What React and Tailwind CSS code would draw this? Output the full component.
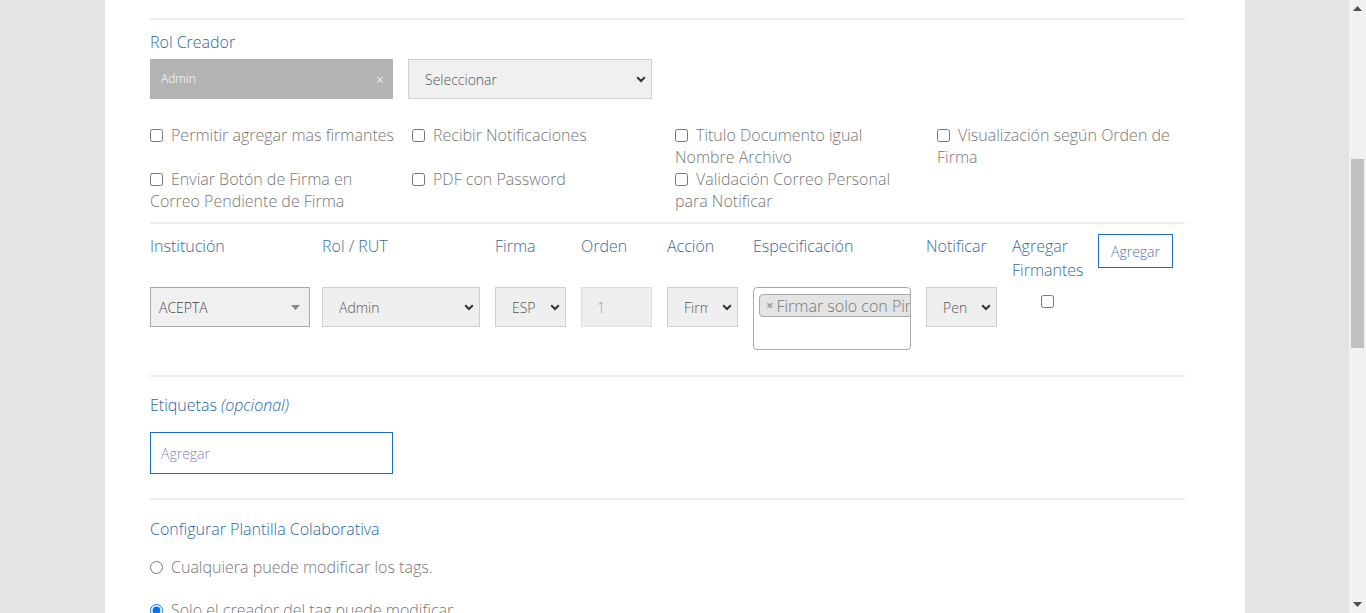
import React from 'react';

// Formulario de configuración de plantilla (firmantes, etiquetas, colaboración)

const font = { fontFamily: '"Open Sans", "Liberation Sans", sans-serif' };

function Chevron() {
  return (
    <svg width="10" height="7" viewBox="0 0 10 7" className="shrink-0">
      <path d="M1.2 1.2 5 5 8.8 1.2" fill="none" stroke="#333" strokeWidth="2" />
    </svg>
  );
}

function FakeSelect({ value, width, bg = 'bg-[#efefef]', border = 'border-[#cfcfcf]' }) {
  return (
    <div className={`flex h-[40px] items-center border ${border} ${bg} pl-[16px] pr-[4px] text-[14px] text-[#555]`} style={{ width }}>
      <span className="flex-1 overflow-hidden whitespace-nowrap">{value}</span>
      <span className="ml-[14px] mr-[1px]">
        <Chevron />
      </span>
    </div>
  );
}

function Check({ label }) {
  return (
    <label className="block w-[262px] pr-[14px] text-[16px] leading-[22px] text-[#777]">
      <input type="checkbox" className="m-0 mr-[8px] inline-block h-[13px] w-[13px] align-[-1px]" />
      {label}
    </label>
  );
}

function Divider({ className = '' }) {
  return <div className={`h-[2px] bg-[#eeeeee] ${className}`} />;
}

export default function App() {
  return (
    <div className="flex h-[613px] w-full overflow-hidden bg-[#e4e4e4] font-light" style={font}>
      <div className="flex-1">
        <div className="ml-[105px] h-full w-[1140px] bg-white pl-[45px] pr-[60px] pt-[18px]">
          <Divider />

          {/* Rol Creador */}
          <div className="mt-[11px] text-[16px] leading-[22px] text-[#2a67a8]">Rol Creador</div>
          <div className="mt-[6px] flex gap-[15px]">
            <div className="flex h-[40px] w-[243px] items-center justify-between bg-[#b3b3b3] pl-[11px] pr-[9px] text-[12px] text-white">
              <span>Admin</span>
              <span className="text-[14px]">×</span>
            </div>
            <div className="flex h-[40px] w-[244px] items-center justify-between border border-[#cfcfcf] bg-[#f0f0f0] pl-[16px] pr-[5px] text-[14px] text-[#555]">
              <span>Seleccionar</span>
              <Chevron />
            </div>
          </div>

          {/* Opciones */}
          <div className="mt-[25px] grid grid-cols-[262px_263px_262px_248px]">
            <Check label="Permitir agregar mas firmantes" />
            <Check label="Recibir Notificaciones" />
            <Check label="Titulo Documento igual Nombre Archivo" />
            <Check label="Visualización según Orden de Firma" />
            <Check label="Enviar Botón de Firma en Correo Pendiente de Firma" />
            <Check label="PDF con Password" />
            <Check label="Validación Correo Personal para Notificar" />
          </div>

          <Divider className="mt-[10px]" />

          {/* Firmantes */}
          <div className="mt-[10px] flex">
            <div className="w-[172px] pr-[12px]">
              <div className="h-[53px] text-[16px] leading-[24px] text-[#3b6b9a]">Institución</div>
              <div className="flex h-[40px] items-center justify-between border border-[#aaaaaa] bg-[#f0f0f0] pl-[8px] pr-[9px] text-[14px] text-[#444]">
                <span>ACEPTA</span>
                <svg width="9" height="5" viewBox="0 0 9 5">
                  <path d="M0 0h9L4.5 5z" fill="#888" />
                </svg>
              </div>
            </div>
            <div className="w-[173px] pr-[15px]">
              <div className="h-[53px] text-[16px] leading-[24px] text-[#3b6b9a]">Rol / RUT</div>
              <div className="flex h-[40px] items-center justify-between border border-[#cfcfcf] bg-[#efefef] pl-[16px] pr-[5px] text-[14px] text-[#555]">
                <span>Admin</span>
                <Chevron />
              </div>
            </div>
            <div className="w-[86px] pr-[15px]">
              <div className="h-[53px] text-[16px] leading-[24px] text-[#3b6b9a]">Firma</div>
              <FakeSelect value="ESP" width="71px" />
            </div>
            <div className="w-[86px] pr-[15px]">
              <div className="h-[53px] text-[16px] leading-[24px] text-[#3b6b9a]">Orden</div>
              <div className="flex h-[40px] w-[71px] items-center border border-[#dddddd] bg-[#eeeeee] pl-[15px] text-[14px] text-[#8a9bb0]">1</div>
            </div>
            <div className="w-[86px] pr-[15px]">
              <div className="h-[53px] text-[16px] leading-[24px] text-[#3b6b9a]">Acción</div>
              <FakeSelect value="Firmar" width="71px" />
            </div>
            <div className="w-[173px] pr-[15px]">
              <div className="h-[53px] text-[16px] leading-[24px] text-[#3b6b9a]">Especificación</div>
              <div className="h-[63px] w-[158px] overflow-hidden rounded-[4px] border border-[#aaaaaa] bg-white pl-[5px] pt-[6px]">
                <div className="flex h-[23px] w-[170px] items-center whitespace-nowrap rounded-[4px] border border-[#aaaaaa] bg-[#e4e4e4] pl-[6px] text-[16px] text-[#777]">
                  <span className="mr-[3px] text-[13px] font-bold text-[#999]">×</span>
                  Firmar solo con Pin
                </div>
              </div>
            </div>
            <div className="w-[86px] pr-[15px]">
              <div className="h-[53px] text-[16px] leading-[24px] text-[#3b6b9a]">Notificar</div>
              <FakeSelect value="Pendiente" width="71px" />
            </div>
            <div className="w-[86px] pr-[15px]">
              <div className="h-[53px] text-[16px] leading-[24px] text-[#3b6b9a]">Agregar Firmantes</div>
              <div className="mt-[8px] flex justify-center">
                <input type="checkbox" className="m-0 h-[13px] w-[13px]" />
              </div>
            </div>
            <div className="w-[86px]">
              <button className="h-[34px] w-[75px] border border-[#1a6fc4] bg-white text-[14px] font-light text-[#5b6fbf]">Agregar</button>
            </div>
          </div>

          <Divider className="mt-[25px]" />

          {/* Etiquetas */}
          <div className="mt-[17px] text-[16px] leading-[22px] text-[#2a67a8]">
            Etiquetas <span className="italic">(opcional)</span>
          </div>
          <input
            placeholder="Agregar"
            className="mt-[16px] h-[42px] w-[243px] border border-[#1a6fc4] bg-white pl-[10px] text-[14px] font-light text-[#555] outline-none placeholder:text-[#7f85c7]"
          />

          <Divider className="mt-[24px]" />

          {/* Plantilla colaborativa */}
          <div className="mt-[18px] text-[16px] leading-[22px] text-[#2a67a8]">Configurar Plantilla Colaborativa</div>
          <label className="mt-[16px] block text-[16px] leading-[22px] text-[#777]">
            <input type="radio" name="colab" className="m-0 mr-[8px] inline-block h-[13px] w-[13px] align-[-1px]" />
            Cualquiera puede modificar los tags.
          </label>
          <label className="mt-[21px] block text-[16px] leading-[22px] text-[#777]">
            <input type="radio" name="colab" defaultChecked className="m-0 mr-[8px] inline-block h-[13px] w-[13px] align-[-1px]" />
            Solo el creador del tag puede modificar
          </label>
        </div>
      </div>

      {/* Barra de desplazamiento */}
      <div className="flex w-[17px] flex-col items-center bg-[#f1f1f1]">
        <svg width="9" height="5" viewBox="0 0 9 5" className="mt-[6px]">
          <path d="M4.5 0 9 5H0z" fill="#505050" />
        </svg>
        <div className="mt-[148px] h-[189px] w-[13px] bg-[#c1c1c1]" />
        <div className="flex-1" />
        <svg width="9" height="5" viewBox="0 0 9 5" className="mb-[6px]">
          <path d="M0 0h9L4.5 5z" fill="#505050" />
        </svg>
      </div>
    </div>
  );
}
